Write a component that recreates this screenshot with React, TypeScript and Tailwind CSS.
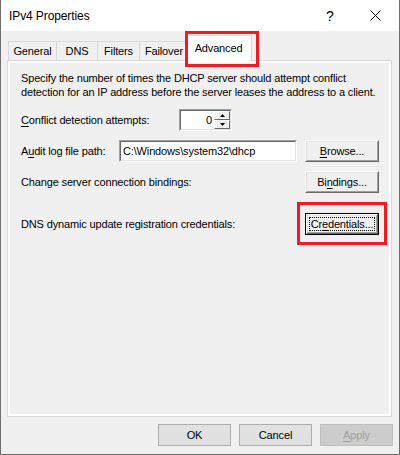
import type { ReactNode } from "react";

function RaisedButton({ children, focused, className = "" }: { children: ReactNode; focused?: boolean; className?: string }) {
  return (
    <div className={`h-[22px] w-[74px] shrink-0 ${focused ? "border border-black" : ""} ${className}`}>
      <div className="h-full w-full border border-t-white border-l-white border-b-[#696969] border-r-[#696969]">
        <div className="h-full w-full border border-t-[#e3e3e3] border-l-[#e3e3e3] border-b-[#a0a0a0] border-r-[#a0a0a0] bg-[#f0f0f0] p-[1px]">
          <div className={`flex h-full w-full items-center justify-center border ${focused ? "border-dotted border-black" : "border-transparent"}`}>
            {children}
          </div>
        </div>
      </div>
    </div>
  );
}

function Sunken({ children, className = "" }: { children: ReactNode; className?: string }) {
  return (
    <div className={`border border-t-[#a0a0a0] border-l-[#a0a0a0] border-b-white border-r-white ${className}`}>
      <div className="flex h-full w-full border border-t-[#696969] border-l-[#696969] border-b-[#e3e3e3] border-r-[#e3e3e3] bg-white">
        {children}
      </div>
    </div>
  );
}

function SpinHalf({ up }: { up?: boolean }) {
  return (
    <div className="flex h-[9px] w-full items-center justify-center border border-t-white border-l-white border-b-[#696969] border-r-[#696969] bg-[#f0f0f0]">
      <svg width="5" height="3" viewBox="0 0 5 3">
        <path d={up ? "M2.5 0 L5 3 L0 3 Z" : "M0 0 L5 0 L2.5 3 Z"} fill="#000" />
      </svg>
    </div>
  );
}

function FlatButton({ children, disabled }: { children: ReactNode; disabled?: boolean }) {
  return (
    <div
      className={`flex h-[22px] w-[73px] items-center justify-center border ${
        disabled ? "border-[#bfbfbf] bg-[#cccccc] text-[#a0a0a0]" : "border-[#adadad] bg-[#e1e1e1] text-black"
      }`}
    >
      {children}
    </div>
  );
}

const tabs = [
  { label: "General", w: "w-[49px] justify-center" },
  { label: "DNS", w: "w-[42px] justify-center" },
  { label: "Filters", w: "w-[43px] justify-center" },
  { label: "Failover", w: "w-[50px] pl-[5px]" },
];

export default function App() {
  return (
    <div className="relative flex h-[455px] w-[400px] flex-col border-x border-b border-[#6e6e6e] bg-[#f0f0f0] font-['Liberation_Sans',Arial,sans-serif] text-[11px] leading-[14px] tracking-[-0.15px] text-black">
      {/* title bar */}
      <div className="flex h-[31px] shrink-0 items-center bg-white">
        <span className="pl-[8px] text-[12px] tracking-[-0.1px]">IPv4 Properties</span>
        <span className="ml-auto w-[12px] text-center text-[14px] tracking-normal">?</span>
        <div className="ml-[34px] mr-[18px] flex items-center">
          <svg width="11" height="11" viewBox="0 0 11 11">
            <path d="M0.5 0.5 L10.5 10.5 M10.5 0.5 L0.5 10.5" stroke="#000" strokeWidth="1" />
          </svg>
        </div>
      </div>

      {/* tabs */}
      <div className="relative z-10 mt-[4px] flex h-[25px] shrink-0 items-end pl-[7px]">
        {tabs.map((t) => (
          <div
            key={t.label}
            className={`flex h-[19px] ${t.w} -mr-px items-center overflow-hidden whitespace-nowrap border-x border-t border-[#d9d9d9] bg-[#f0f0f0]`}
          >
            {t.label}
          </div>
        ))}
        <div className="-mb-px -ml-[3px] flex h-[26px] w-[67px] items-center justify-center border-x border-t border-[#d9d9d9] bg-white pb-[2px]">
          Advanced
        </div>
      </div>

      {/* tab page */}
      <div className="ml-[6px] mr-[7px] h-[357px] shrink-0 border border-[#d9d9d9]">
        <div className="h-full w-full border-2 border-white bg-[#f0f0f0] pl-[11px] pr-[10px] pt-[8px]">
          <p className="whitespace-nowrap">
            Specify the number of times the DHCP server should attempt conflict
            <br />
            detection for an IP address before the server leases the address to a client.
          </p>

          <div className="mt-[10px] flex items-center">
            <div className="w-[158px]">
              <span className="underline underline-offset-2">C</span>onflict detection attempts:
            </div>
            <Sunken className="h-[22px] w-[53px]">
              <div className="flex flex-1 items-center justify-end pr-[2px]">0</div>
              <div className="flex w-[16px] flex-col">
                <SpinHalf up />
                <SpinHalf />
              </div>
            </Sunken>
          </div>

          <div className="mt-[9px] flex items-center">
            <div className="w-[98px]">
              A<span className="underline underline-offset-2">u</span>dit log file path:
            </div>
            <Sunken className="h-[22px] w-[178px]">
              <div className="flex items-center pl-[2px]">C:\Windows\system32\dhcp</div>
            </Sunken>
            <RaisedButton className="ml-auto">
              <span>
                <span className="underline underline-offset-2">B</span>rowse...
              </span>
            </RaisedButton>
          </div>

          <div className="mt-[9px] flex items-center">
            <div className="flex-1">Change server connection bindings:</div>
            <RaisedButton>
              <span>
                Bi<span className="underline underline-offset-2">n</span>dings...
              </span>
            </RaisedButton>
          </div>

          <div className="mt-[20px] flex items-center">
            <div className="flex-1">DNS dynamic update registration credentials:</div>
            <RaisedButton focused>
              <span>
                Cr<span className="underline underline-offset-2">e</span>dentials...
              </span>
            </RaisedButton>
          </div>
        </div>
      </div>

      {/* dialog buttons */}
      <div className="mt-[7px] flex justify-end gap-[8px] pr-[6px]">
        <FlatButton>OK</FlatButton>
        <FlatButton>Cancel</FlatButton>
        <FlatButton disabled>
          <span>
            <span className="underline underline-offset-2">A</span>pply
          </span>
        </FlatButton>
      </div>

      {/* annotation boxes */}
      <div className="absolute left-[184px] top-[31px] z-20 h-[36px] w-[74px] border-[3px] border-[#ed1c24]" />
      <div className="absolute left-[296px] top-[202px] z-20 h-[43px] w-[90px] border-[3px] border-[#ed1c24]" />
    </div>
  );
}
